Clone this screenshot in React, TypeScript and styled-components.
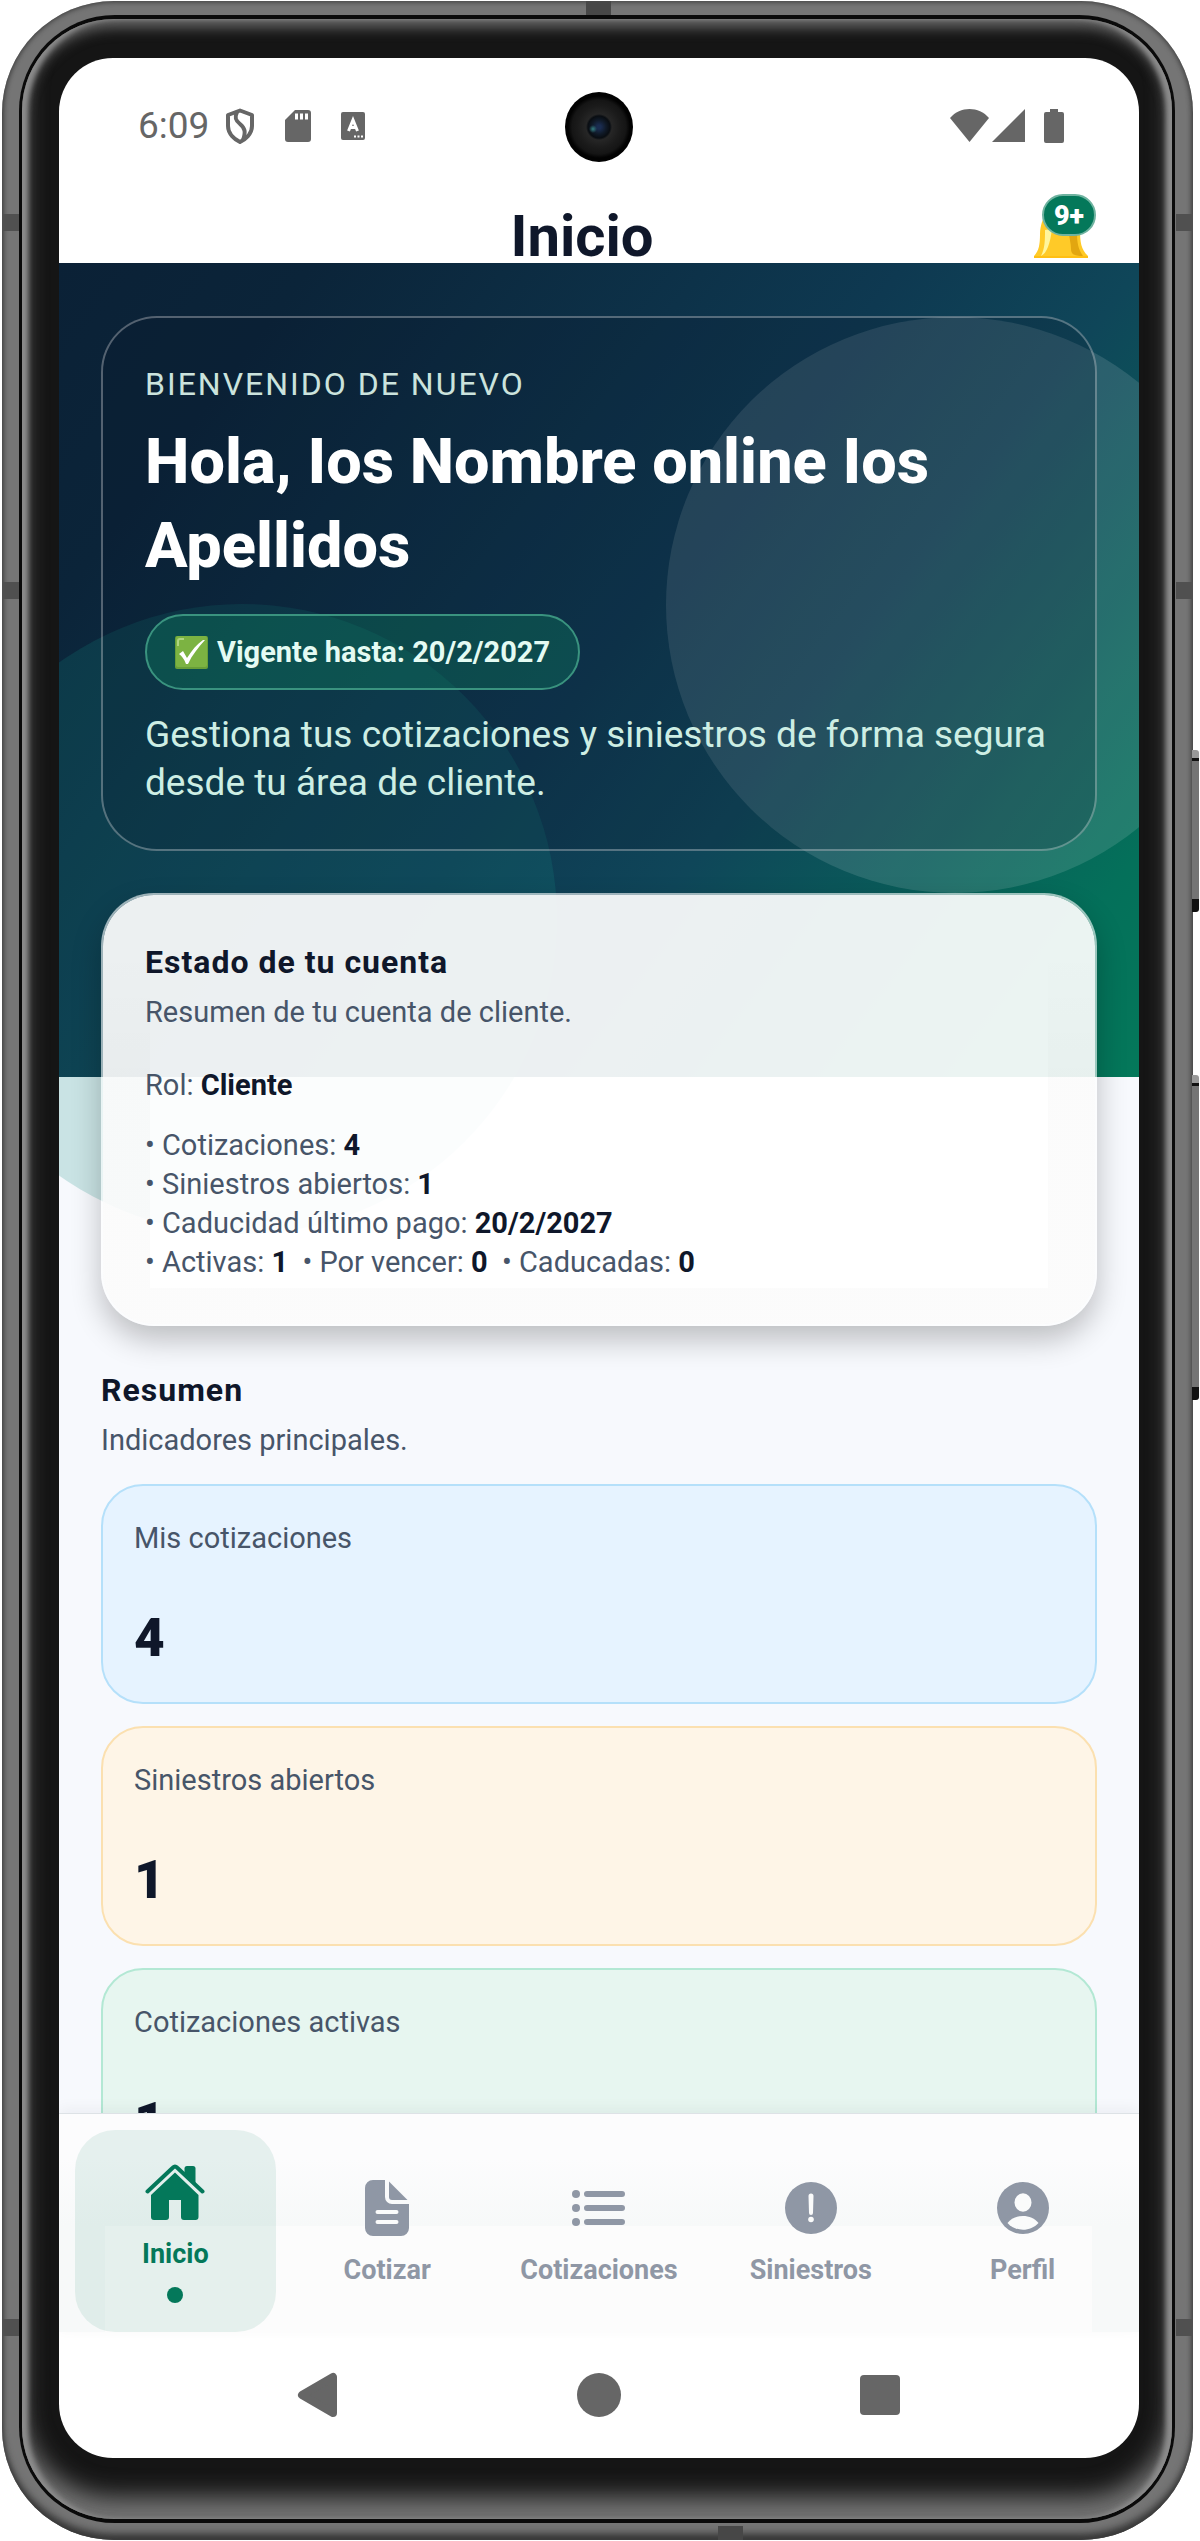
import React from "react";
import styled, { createGlobalStyle } from "styled-components";

const ink = "#0f172a";
const slate = "#475569";
const brand = "#04785a";
const muted = "#8f97a5";
const system = "#666666";

const Global = createGlobalStyle`
  *, *::before, *::after { box-sizing: border-box; }
  body { margin: 0; background: #ffffff; font-family: Roboto, "Noto Sans", sans-serif; color: ${slate}; }
  h1, h2, p, ul { margin: 0; padding: 0; }
  button { border: 0; padding: 0; background: none; font: inherit; cursor: pointer; }
  a { text-decoration: none; }
  svg { display: block; }
`;

/* ---------- device ---------- */

const Page = styled.div`
  height: 100vh;
  min-height: 1400px;
  padding: 1px 7px 1px 2px;
`;

const Metal = styled.div`
  position: relative;
  height: 100%;
  padding: 14px 18px 17px 17px;
  border-radius: 112px;
  background: #757575;
  box-shadow: inset 0 0 5px 1px #3c3c3c, inset 0 -9px 9px -3px #333333;
`;

const Groove = styled.div`
  height: 100%;
  padding: 4px 3px;
  border-radius: 96px;
  background: #0a0a0a;
`;

const Glass = styled.div`
  height: 100%;
  padding: 39px 33px 61px 37px;
  border-radius: 92px;
  background: #151515;
  box-shadow: inset 7px 0 5px -1px #8c8c8c, inset -7px 0 5px -1px #8c8c8c,
    inset 0 8px 14px #6c6c6c, inset 0 -22px 24px #757575;
`;

const Screen = styled.main`
  position: relative;
  display: flex;
  flex-direction: column;
  height: 100%;
  border-radius: 54px;
  overflow: hidden;
  background: #ffffff;
`;

const SideKey = styled.span<{ $top: string; $height: string }>`
  position: absolute;
  right: -6px;
  top: ${(p) => p.$top};
  height: ${(p) => p.$height};
  width: 7px;
  border-radius: 0 3px 3px 0;
  background: linear-gradient(#999999 8px, #111111 8px, #111111 11px, #747474 11px,
    #747474 calc(100% - 13px), #111111 calc(100% - 13px));
`;

const Band = styled.span<{ $side: "left" | "right"; $top: string }>`
  position: absolute;
  ${(p) => p.$side}: 0;
  top: ${(p) => p.$top};
  width: 17px;
  height: 17px;
  background: #505050;
`;

const EdgeBand = styled.span<{ $edge: "top" | "bottom"; $left: string }>`
  position: absolute;
  ${(p) => p.$edge}: 0;
  left: ${(p) => p.$left};
  width: 25px;
  height: 14px;
  background: #474747;
`;

/* ---------- status bar and header ---------- */

const StatusBar = styled.div`
  position: relative;
  flex: none;
  display: flex;
  justify-content: space-between;
  align-items: center;
  height: 136px;
  padding: 0 75px 0 79px;
  color: ${system};
`;

const StatusGroup = styled.div<{ $gap: number }>`
  display: flex;
  align-items: center;
  gap: ${(p) => p.$gap}px;
`;

const Clock = styled.time`
  margin-right: -14px;
  font-size: 37px;
  line-height: 44px;
`;

const BatterySlot = styled.span`
  padding-left: 16px;
`;

const Camera = styled.span`
  position: absolute;
  left: 50%;
  top: 34px;
  width: 68px;
  height: 70px;
  margin-left: -34px;
  border-radius: 50%;
  background: radial-gradient(circle at 18px 37px, rgba(60, 150, 150, 0.8) 0, rgba(60, 150, 150, 0) 4px) 10px 0 no-repeat,
    radial-gradient(circle, #1a2c50 0 2px, #101a28 7px, #090d12 11px, #262626 13px,
    #1b1b1b 21px, #151515 27px, #020202 31px);
`;

const Header = styled.header`
  flex: none;
  display: flex;
  align-items: flex-start;
  height: 69px;
  padding: 0 51px 0 71px;
`;

const Title = styled.h1`
  flex: 1;
  text-align: center;
  font-size: 58px;
  font-weight: 700;
  line-height: 84px;
  height: 69px;
  color: ${ink};
`;

const BellButton = styled.button`
  position: relative;
  width: 54px;
  height: 64px;
`;

const Badge = styled.span`
  position: absolute;
  top: 0;
  left: 8px;
  width: 54px;
  height: 42px;
  border: 2px solid #6fb3a0;
  border-radius: 21px;
  background: ${brand};
  color: #ffffff;
  font-size: 27px;
  font-weight: 900;
  line-height: 40px;
  text-align: center;
`;

/* ---------- feed ---------- */

const Feed = styled.div`
  position: relative;
  flex: 1;
  min-height: 0;
  overflow: hidden;
  background: #f7f9fd;
`;

const Backdrop = styled.div`
  position: absolute;
  inset: 0 0 auto 0;
  height: 814px;
  background: linear-gradient(127deg, #0b2136 0%, #0b2439 15%, #0e3951 50%, #0f4659 64%, #04705a 90%, #04785a 100%);
`;

const Halo = styled.span`
  position: absolute;
  top: 54px;
  right: -105px;
  width: 578px;
  height: 576px;
  border-radius: 50%;
  background: rgba(255, 255, 255, 0.12);
`;

const Pool = styled.span`
  position: absolute;
  left: -132px;
  bottom: -157px;
  width: 630px;
  height: 630px;
  border-radius: 50%;
  background: rgba(20, 138, 128, 0.2);
`;

const Content = styled.div`
  position: relative;
  display: flex;
  flex-direction: column;
  padding: 53px 42px;
`;

const Welcome = styled.section`
  padding: 42px;
  border: 2px solid rgba(255, 255, 255, 0.3);
  border-radius: 56px;
  background: rgba(10, 20, 40, 0.2);
`;

const Eyebrow = styled.p`
  font-size: 32px;
  line-height: 48px;
  letter-spacing: 2px;
  color: #cbe3dd;
`;

const Greeting = styled.h2`
  margin-top: 12px;
  font-size: 63px;
  font-weight: 800;
  line-height: 84px;
  color: #ffffff;
`;

const Pill = styled.div`
  display: inline-flex;
  align-items: center;
  gap: 9px;
  height: 76px;
  margin-top: 26px;
  padding: 0 28px;
  border: 2px solid #3a937f;
  border-radius: 38px;
  background: rgba(16, 150, 100, 0.28);
  color: #e4fbf3;
  font-size: 29px;
  font-weight: 700;
`;

const Lead = styled.p`
  margin-top: 21px;
  font-size: 37px;
  line-height: 48px;
  color: #cdeee4;
`;

const Account = styled.section`
  margin-top: 42px;
  padding: 42px;
  border: 2px solid rgba(255, 255, 255, 0.6);
  border-radius: 53px;
  background:
    linear-gradient(transparent 50px, rgba(0, 0, 0, 0.016) 180px) 0 0 / 47px 100% no-repeat padding-box,
    linear-gradient(transparent 50px, rgba(0, 0, 0, 0.016) 180px) 100% 0 / 47px 100% no-repeat padding-box,
    linear-gradient(rgba(0, 0, 0, 0.016), rgba(0, 0, 0, 0.016)) 50% 100% / calc(100% - 94px) 36px no-repeat padding-box,
    rgba(255, 255, 255, 0.92) padding-box;
  box-shadow: 0 14px 30px rgba(0, 0, 0, 0.24);
`;

const SectionTitle = styled.h2`
  font-size: 32px;
  font-weight: 700;
  line-height: 50px;
  letter-spacing: 1px;
  color: ${ink};
`;

const Line = styled.p<{ $space: number }>`
  margin-top: ${(p) => p.$space}px;
  font-size: 29px;
  line-height: 39px;
`;

const Facts = styled.ul`
  margin-top: 21px;
  list-style: none;
  font-size: 29px;
  line-height: 39px;
  white-space: pre-wrap;
`;

const Strong = styled.strong`
  font-weight: 700;
  color: ${ink};
`;

const Summary = styled.section`
  margin-top: 39px;
`;

const Stats = styled.div`
  display: grid;
  gap: 22px;
  margin-top: 24px;
`;

const Stat = styled.article<{ $fill: string; $line: string }>`
  display: flex;
  flex-direction: column;
  justify-content: space-between;
  min-height: 220px;
  padding: 33px 31px;
  border: 2px solid ${(p) => p.$line};
  border-radius: 42px;
  background: ${(p) => p.$fill};
`;

const StatLabel = styled.p`
  font-size: 29px;
  line-height: 39px;
`;

const StatValue = styled.p`
  font-size: 53px;
  font-weight: 900;
  line-height: 62px;
  color: ${ink};
`;

/* ---------- bottom bars ---------- */

const Tabs = styled.nav`
  position: relative;
  flex: none;
  display: grid;
  grid-template-columns: repeat(5, minmax(0, 1fr));
  gap: 11px;
  height: 219px;
  padding: 16px 16px 0;
  border-top: 1px solid #dde2e6;
  background:
    linear-gradient(#fcfcfc, #fcfcfc) 46px 112px / calc(100% - 93px) 100% no-repeat,
    linear-gradient(#fcfcfd 20%, #f7f9f9 51%);
  box-shadow: 0 -4px 14px rgba(15, 23, 42, 0.05);
`;

const Tab = styled.a<{ $active?: boolean }>`
  display: flex;
  flex-direction: column;
  align-items: center;
  justify-content: center;
  padding-top: 4px;
  border-radius: 40px;
  background: ${(p) => (p.$active ? "rgba(4, 120, 87, 0.09)" : "transparent")};
  color: ${(p) => (p.$active ? brand : muted)};
  font-size: 27px;
  font-weight: 700;
  line-height: 32px;
`;

const TabIcon = styled.span`
  display: grid;
  place-items: center;
  height: 56px;
  margin-bottom: 18px;
`;

const Dot = styled.span`
  width: 16px;
  height: 16px;
  margin-top: 17px;
  border-radius: 50%;
  background: currentColor;
`;

const SystemBar = styled.div`
  flex: none;
  display: flex;
  justify-content: center;
  align-items: center;
  gap: 237px;
  height: 126px;
  color: ${system};
`;

const SystemKey = styled.button`
  display: grid;
  place-items: center;
  width: 44px;
  height: 46px;
  color: inherit;
`;

/* ---------- drawings ---------- */

const ShieldIcon = () => (
  <svg width="30" height="36" viewBox="0 0 30 36" fill="none" stroke="currentColor" strokeWidth="4" strokeLinejoin="round">
    <path d="M15 2.5 27 7v11c0 8-7 13.500-12 16C10 31.500 3 26 3 18V7Z" />
    <path d="M12 4c-3 6-1 9 3 12 5 4 6 8 3 16" />
  </svg>
);

const SdIcon = () => (
  <svg width="26" height="32" viewBox="0 0 26 32">
    <path fill="currentColor" d="M10 0h13a3 3 0 0 1 3 3v26a3 3 0 0 1-3 3H3a3 3 0 0 1-3-3V10Z" />
    <path fill="#fff" d="M10 3.500h3v6h-3zM15 3.500h3v6h-3zM20 3.500h3v6h-3z" />
  </svg>
);

const LetterIcon = () => (
  <svg width="24" height="28" viewBox="0 0 24 28">
    <rect width="24" height="28" rx="2" fill="currentColor" />
    <path d="M7.500 19 12 8l4.500 11M9 15.500h6" fill="none" stroke="#fff" strokeWidth="3" />
    <path d="M13 23.500h2v2h-2zM16.500 23.500h2v2h-2zM20 23.500h2v2h-2z" fill="#fff" />
  </svg>
);

const WifiIcon = () => (
  <svg width="39" height="34" viewBox="0 0 39 34">
    <path fill="currentColor" d="M0 9C10-3 29-3 39 9L19.500 33Z" />
  </svg>
);

const SignalIcon = () => (
  <svg width="33" height="34" viewBox="0 0 33 34">
    <path fill="currentColor" d="M33 0v33H0Z" />
  </svg>
);

const BatteryIcon = () => (
  <svg width="20" height="34" viewBox="0 0 20 34">
    <path fill="currentColor" d="M6 0h8v3h4a2 2 0 0 1 2 2v27a2 2 0 0 1-2 2H2a2 2 0 0 1-2-2V5a2 2 0 0 1 2-2h4Z" />
  </svg>
);

const BellIcon = () => (
  <svg width="54" height="64" viewBox="0 0 54 64">
    <path fill="#ffca28" d="M27 14c11 0 18 8 19 20 0 15 1 21 8 28v2H0v-2c5-5 6-12 6-22C7 22 15 14 27 14Z" />
    <path fill="#fff59d" d="M11 36c0 10 0 18-4 26 6-3 9-12 11-27Z" />
    <path fill="#e2a610" d="M35 38h8c0 10 1 17 6 24-9 0-12-2-12-7 0-6-2-11-2-17Z" />
    <path fill="#ffb300" d="M0 62h54v2H0Z" opacity=".5" />
  </svg>
);

const CheckIcon = () => (
  <svg width="33" height="33" viewBox="0 0 33 33">
    <rect width="33" height="33" rx="2" fill="#689f38" />
    <rect x="1" y="0" width="31" height="31" rx="2" fill="#7cb342" />
    <path d="M3 10V5q0-2 2-2h4" fill="none" stroke="#aed581" strokeWidth="2" />
    <path d="m4 18 4-3 4 7C17 14 22 8 28 4h2C23 12 17 19 13 28h-2C9 23 7 20 4 18Z" fill="#fff" />
  </svg>
);

const HomeIcon = () => (
  <svg width="60" height="56" viewBox="0 0 60 56" fill="currentColor">
    <path d="M30 8.500 53.500 31v22a3 3 0 0 1-3 3H39a3 3 0 0 1-3-3V36H24v17a3 3 0 0 1-3 3H9a3 3 0 0 1-3-3V31Z" />
    <path d="M39.500 4.500a2.500 2.500 0 0 1 2.500-2.500h6a2.500 2.500 0 0 1 2.500 2.500V20L39.500 9.500Z" />
    <path d="M2.500 27.500 28 3.500q2-2 4 0l25.500 24" fill="none" stroke="currentColor" strokeWidth="4" strokeLinecap="round" />
  </svg>
);

const DocIcon = () => (
  <svg width="44" height="56" viewBox="0 0 44 56" fill="currentColor">
    <path d="M8 0h12v17a7 7 0 0 0 7 7h17v24a8 8 0 0 1-8 8H8a8 8 0 0 1-8-8V8a8 8 0 0 1 8-8Z" />
    <path d="M24 1.500 42.500 20H27a3 3 0 0 1-3-3Z" />
    <path d="M12.500 32h19M12.500 42h19" stroke="#fafbfb" strokeWidth="4" strokeLinecap="round" />
  </svg>
);

const ListIcon = () => (
  <svg width="53" height="36" viewBox="0 0 53 36" stroke="currentColor" fill="currentColor">
    <path d="M15 4h35M15 18h35M15 32h35" strokeWidth="6" strokeLinecap="round" />
    <g stroke="none">
      <circle cx="4" cy="4" r="4" />
      <circle cx="4" cy="18" r="4" />
      <circle cx="4" cy="32" r="4" />
    </g>
  </svg>
);

const AlertIcon = () => (
  <svg width="52" height="52" viewBox="0 0 52 52">
    <circle cx="26" cy="26" r="26" fill="currentColor" />
    <path d="M23.500 14a2.500 2.500 0 0 1 5 0L28 31a2 2 0 0 1-4 0Z" fill="#fafbfb" />
    <circle cx="26" cy="37.500" r="2.800" fill="#fafbfb" />
  </svg>
);

const PersonIcon = () => (
  <svg width="52" height="52" viewBox="0 0 52 52">
    <circle cx="26" cy="26" r="26" fill="currentColor" />
    <ellipse cx="26" cy="20.500" rx="8.500" ry="9.200" fill="#fafbfb" />
    <path d="M10.500 41c7-9.500 24-9.500 31 0-8 9-23 9-31 0Z" fill="#fafbfb" />
  </svg>
);

/* ---------- data ---------- */

const stats = [
  { label: "Mis cotizaciones", value: 4, fill: "#e6f3ff", line: "#b5e0fa" },
  { label: "Siniestros abiertos", value: 1, fill: "#fef5e7", line: "#fbe0b0" },
  { label: "Cotizaciones activas", value: 1, fill: "#e7f6f0", line: "#b3e8d4" },
];

const tabs = [
  { label: "Inicio", Icon: HomeIcon, active: true },
  { label: "Cotizar", Icon: DocIcon },
  { label: "Cotizaciones", Icon: ListIcon },
  { label: "Siniestros", Icon: AlertIcon },
  { label: "Perfil", Icon: PersonIcon },
];

export default function App() {
  return (
    <>
      <Global />
      <Page>
        <Metal>
          <Band $side="left" $top="8.4%" />
          <Band $side="right" $top="8.4%" />
          <Band $side="left" $top="22.9%" />
          <Band $side="right" $top="22.9%" />
          <Band $side="left" $top="91.3%" />
          <Band $side="right" $top="91.3%" />
          <EdgeBand $edge="top" $left="49%" />
          <EdgeBand $edge="bottom" $left="60.1%" />
          <SideKey $top="29.5%" $height="6.4%" />
          <SideKey $top="42.3%" $height="12.8%" />
          <Groove>
            <Glass>
              <Screen>
                <StatusBar>
                  <StatusGroup $gap={30}>
                    <Clock>6:09</Clock>
                    <ShieldIcon />
                    <SdIcon />
                    <LetterIcon />
                  </StatusGroup>
                  <Camera />
                  <StatusGroup $gap={3}>
                    <WifiIcon />
                    <SignalIcon />
                    <BatterySlot>
                      <BatteryIcon />
                    </BatterySlot>
                  </StatusGroup>
                </StatusBar>
                <Header>
                  <Title>Inicio</Title>
                  <BellButton type="button" aria-label="Notificaciones">
                    <BellIcon />
                    <Badge>9+</Badge>
                  </BellButton>
                </Header>
                <Feed>
                  <Backdrop>
                    <Halo />
                    <Pool />
                  </Backdrop>
                  <Content>
                    <Welcome>
                      <Eyebrow>BIENVENIDO DE NUEVO</Eyebrow>
                      <Greeting>Hola, Ios Nombre online Ios Apellidos</Greeting>
                      <Pill>
                        <CheckIcon />
                        <span>Vigente hasta: 20/2/2027</span>
                      </Pill>
                      <Lead>Gestiona tus cotizaciones y siniestros de forma segura desde tu área de cliente.</Lead>
                    </Welcome>
                    <Account>
                      <SectionTitle>Estado de tu cuenta</SectionTitle>
                      <Line $space={6}>Resumen de tu cuenta de cliente.</Line>
                      <Line $space={34}>
                        Rol: <Strong>Cliente</Strong>
                      </Line>
                      <Facts>
                        <li>• Cotizaciones: <Strong>4</Strong></li>
                        <li>• Siniestros abiertos: <Strong>1</Strong></li>
                        <li>• Caducidad último pago: <Strong>20/2/2027</Strong></li>
                        <li>
                          • Activas: <Strong>1</Strong>{"  "}• Por vencer: <Strong>0</Strong>{"  "}• Caducadas: <Strong>0</Strong>
                        </li>
                      </Facts>
                    </Account>
                    <Summary>
                      <SectionTitle>Resumen</SectionTitle>
                      <Line $space={6}>Indicadores principales.</Line>
                      <Stats>
                        {stats.map((s) => (
                          <Stat key={s.label} $fill={s.fill} $line={s.line}>
                            <StatLabel>{s.label}</StatLabel>
                            <StatValue>{s.value}</StatValue>
                          </Stat>
                        ))}
                      </Stats>
                    </Summary>
                  </Content>
                </Feed>
                <Tabs>
                  {tabs.map(({ label, Icon, active }) => (
                    <Tab key={label} href="#" $active={active} aria-current={active ? "page" : undefined}>
                      <TabIcon>
                        <Icon />
                      </TabIcon>
                      {label}
                      {active && <Dot />}
                    </Tab>
                  ))}
                </Tabs>
                <SystemBar>
                  <SystemKey type="button" aria-label="Atrás">
                    <svg width="42" height="46" viewBox="0 0 42 46">
                      <path d="M5 23 36 5v36Z" fill="currentColor" stroke="currentColor" strokeWidth="8" strokeLinejoin="round" />
                    </svg>
                  </SystemKey>
                  <SystemKey type="button" aria-label="Inicio del sistema">
                    <svg width="44" height="44" viewBox="0 0 44 44">
                      <circle cx="22" cy="22" r="22" fill="currentColor" />
                    </svg>
                  </SystemKey>
                  <SystemKey type="button" aria-label="Recientes">
                    <svg width="40" height="40" viewBox="0 0 40 40">
                      <rect width="40" height="40" rx="4" fill="currentColor" />
                    </svg>
                  </SystemKey>
                </SystemBar>
              </Screen>
            </Glass>
          </Groove>
        </Metal>
      </Page>
    </>
  );
}
